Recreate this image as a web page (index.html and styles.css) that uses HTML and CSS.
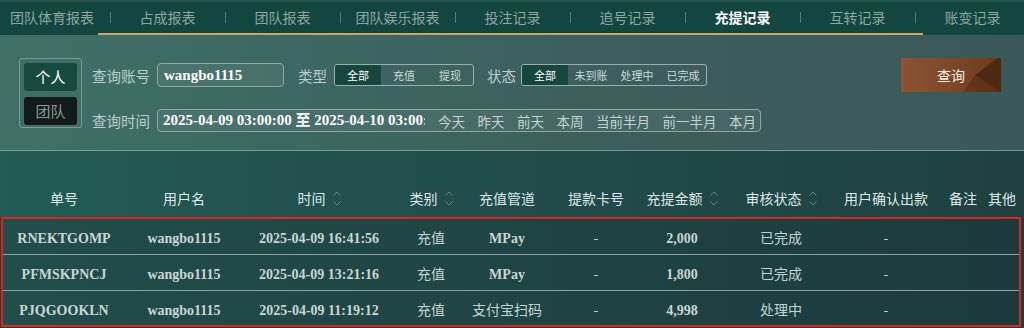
FILE: index.html
```html
<!DOCTYPE html>
<html lang="zh-CN">
<head>
	<meta charset="UTF-8">
	<title>充提记录</title>
	<link rel="stylesheet" href="styles.css">
</head>
<body>
	<!--顶部标签-->
	<div class="tabbar">
		<div class="tabs">
			<div class="tab first">团队体育报表</div>
			<div class="tab">占成报表</div>
			<div class="tab">团队报表</div>
			<div class="tab">团队娱乐报表</div>
			<div class="tab">投注记录</div>
			<div class="tab">追号记录</div>
			<div class="tab active">充提记录</div>
			<div class="tab">互转记录</div>
			<div class="tab">账变记录</div>
		</div>
		<div class="tab-line"></div>
	</div>

	<!--查询条件-->
	<div class="filter">
		<div class="toggle">
			<div class="toggle-btn on">个人</div>
			<div class="toggle-btn off">团队</div>
		</div>
		<div class="fields">
			<div class="field-row">
				<span class="label">查询账号</span>
				<div class="input account">wangbo1115</div>
				<span class="label ml">类型</span>
				<div class="seg">
					<span class="seg-item cur">全部</span>
					<span class="seg-item">充值</span>
					<span class="seg-item">提现</span>
				</div>
				<span class="label ml2">状态</span>
				<div class="seg">
					<span class="seg-item cur">全部</span>
					<span class="seg-item">未到账</span>
					<span class="seg-item">处理中</span>
					<span class="seg-item">已完成</span>
				</div>
			</div>
			<div class="field-row second">
				<span class="label">查询时间</span>
				<div class="input time">
					<div class="time-val">2025-04-09 03:00:00 至 2025-04-10 03:00:00</div>
					<div class="quick">
						<span>今天</span>
						<span>昨天</span>
						<span>前天</span>
						<span>本周</span>
						<span>当前半月</span>
						<span>前一半月</span>
						<span>本月</span>
					</div>
				</div>
			</div>
		</div>
		<div class="search-btn">查询</div>
	</div>

	<!--表格-->
	<div class="table">
		<div class="thead cols">
			<div>单号</div>
			<div>用户名</div>
			<div class="sort">时间<svg width="8" height="15" viewBox="0 0 8 15"><polyline points="0.5,4.5 4,1 7.5,4.5"/><polyline points="0.5,10.5 4,14 7.5,10.5"/></svg></div>
			<div class="sort">类别<svg width="8" height="15" viewBox="0 0 8 15"><polyline points="0.5,4.5 4,1 7.5,4.5"/><polyline points="0.5,10.5 4,14 7.5,10.5"/></svg></div>
			<div>充值管道</div>
			<div>提款卡号</div>
			<div class="sort">充提金额<svg width="8" height="15" viewBox="0 0 8 15"><polyline points="0.5,4.5 4,1 7.5,4.5"/><polyline points="0.5,10.5 4,14 7.5,10.5"/></svg></div>
			<div class="sort">审核状态<svg width="8" height="15" viewBox="0 0 8 15"><polyline points="0.5,4.5 4,1 7.5,4.5"/><polyline points="0.5,10.5 4,14 7.5,10.5"/></svg></div>
			<div>用户确认出款</div>
			<div>备注</div>
			<div>其他</div>
		</div>
		<div class="tbody">
			<div class="row cols">
				<div class="en">RNEKTGOMP</div>
				<div class="en">wangbo1115</div>
				<div class="en">2025-04-09 16:41:56</div>
				<div>充值</div>
				<div class="en">MPay</div>
				<div>-</div>
				<div class="en">2,000</div>
				<div>已完成</div>
				<div>-</div>
				<div></div>
				<div></div>
			</div>
			<div class="row cols">
				<div class="en">PFMSKPNCJ</div>
				<div class="en">wangbo1115</div>
				<div class="en">2025-04-09 13:21:16</div>
				<div>充值</div>
				<div class="en">MPay</div>
				<div>-</div>
				<div class="en">1,800</div>
				<div>已完成</div>
				<div>-</div>
				<div></div>
				<div></div>
			</div>
			<div class="row cols last">
				<div class="en">PJQGOOKLN</div>
				<div class="en">wangbo1115</div>
				<div class="en">2025-04-09 11:19:12</div>
				<div>充值</div>
				<div>支付宝扫码</div>
				<div>-</div>
				<div class="en">4,998</div>
				<div>处理中</div>
				<div>-</div>
				<div></div>
				<div></div>
			</div>
		</div>
	</div>
</body>
</html>
```

FILE: styles.css
```css
body{
	margin: 0;
	width: 1024px;
	height: 328px;
	overflow: hidden;
	font-family: "Noto Sans CJK SC", sans-serif;
	background-color: #1d3d3e;
	border-top: 2px solid #21544c;
	box-sizing: border-box;
}
/*顶部标签*/
.tabbar{
	background-color: #12463e;
	overflow: hidden;
}
.tabs{
	display: flex;
	height: 31px;
}
.tab{
	flex: none;
	width: 115px;
	line-height: 31px;
	text-align: center;
	font-size: 14px;
	color: #8ea7a1;
	background: linear-gradient(#557b73, #557b73) left center / 1px 11px no-repeat;
}
.tab.first{
	width: 110px;
	padding-right: 6px;
	box-sizing: border-box;
	background: none;
}
.tab.active{
	color: #ffffff;
	font-weight: 700;
}
.tab-line{
	width: 825px;
	height: 2px;
	margin-left: 98px;
	background-color: #c6a86a;
}
/*查询条件*/
.filter{
	display: flex;
	align-items: flex-start;
	height: 116px;
	padding: 23px 23px 0 19px;
	box-sizing: border-box;
	background: linear-gradient(90deg, #3f7068, #3c5e5c 60%, #3b5858);
	border-bottom: 1px solid #7f9997;
}
.toggle{
	width: 63px;
	height: 70px;
	padding: 4px;
	box-sizing: border-box;
	border: 1px solid #7b9994;
	border-radius: 3px;
	display: flex;
	flex-direction: column;
	gap: 6px;
}
.toggle-btn{
	height: 28px;
	line-height: 28px;
	text-align: center;
	font-size: 15px;
	border-radius: 3px;
}
.toggle-btn.on{
	background-color: #164a40;
	color: #ffffff;
}
.toggle-btn.off{
	background-color: #121a1a;
	color: #8b9a98;
}
.fields{
	margin-left: 10px;
	margin-top: 5px;
}
.field-row{
	display: flex;
	align-items: center;
	height: 24px;
}
.field-row.second{
	margin-top: 22px;
	height: 23px;
}
.label{
	font-size: 14.5px;
	color: #b9cfcb;
	margin-right: 7px;
	white-space: nowrap;
}
.label.ml{
	margin-left: 14px;
}
.label.ml2{
	margin-left: 13px;
	margin-right: 5px;
}
.input{
	height: 24px;
	border: 1px solid #90a8a4;
	border-radius: 4px;
	box-sizing: border-box;
	background-color: rgba(255,255,255,0.06);
	font-family: "Liberation Serif", "Noto Sans CJK SC", serif;
	font-weight: 700;
	font-size: 15px;
	color: #ffffff;
}
.input.account{
	width: 127px;
	padding-left: 6px;
	line-height: 22px;
}
.input.time{
	width: 604px;
	height: 23px;
	display: flex;
	align-items: center;
	padding-left: 5px;
}
.time-val{
	width: 262px;
	flex: none;
	overflow: hidden;
	white-space: nowrap;
	line-height: 21px;
}
.quick{
	display: flex;
	gap: 12.5px;
	margin-left: 13px;
	font-family: "Noto Sans CJK SC", sans-serif;
	font-weight: 400;
	font-size: 13.5px;
	color: #c3d4d0;
	white-space: nowrap;
}
.seg{
	display: flex;
	height: 22px;
	border: 1px solid #9bb0ad;
	border-radius: 3px;
	box-sizing: border-box;
	overflow: hidden;
}
.seg-item{
	width: 46px;
	line-height: 20px;
	text-align: center;
	font-size: 11px;
	color: #cbdbd8;
}
.seg-item.cur{
	background-color: #17463d;
	color: #ffffff;
}
.search-btn{
	position: relative;
	margin-left: auto;
	width: 100px;
	height: 34px;
	line-height: 34px;
	text-align: center;
	font-size: 14px;
	color: #f7ece4;
	background: linear-gradient(90deg, #8c5334, #7a4527 60%, #6c391d);
	overflow: hidden;
}
.search-btn::before{
	content: "";
	position: absolute;
	top: 0;
	left: 0;
	width: 100%;
	height: 100%;
	background-color: rgba(40,15,0,0.25);
	clip-path: polygon(74% 50%, 100% 100%, 62% 100%);
}
.search-btn::after{
	content: "";
	position: absolute;
	top: 0;
	left: 0;
	width: 100%;
	height: 100%;
	background-color: #4f2812;
	clip-path: polygon(97% 0, 100% 0, 100% 100%, 74% 50%);
}
/*表格*/
.cols{
	display: grid;
	grid-template-columns: 122px 118px 152px 72px 80px 98px 74px 124px 86px 68px 10px;
	justify-items: center;
	align-items: center;
	white-space: nowrap;
}
.cols > div{
	line-height: 20px;
}
.thead{
	height: 66px;
	padding: 0 0 9px 3px;
	box-sizing: border-box;
	align-items: end;
	font-size: 14px;
	color: #dde9e6;
	background: linear-gradient(90deg, #235b56, #214c4b 50%, #1f4041);
}
.sort{
	display: flex;
	align-items: center;
	gap: 7px;
}
.sort svg{
	fill: none;
	stroke: #5f847e;
	stroke-width: 1;
}
.tbody{
	margin: 0 3px 0 1px;
	border: 2px solid #d8271f;
}
.row{
	height: 36px;
	padding-top: 8px;
	box-sizing: border-box;
	align-items: baseline;
	border-bottom: 1px solid #8ea6a3;
	font-size: 14px;
	color: #c3d4d0;
	background: linear-gradient(90deg, #214d4a, #1f4444 50%, #1c3a3c);
}
.row.last{
	height: 34px;
	border-bottom: none;
}
.row .en{
	font-family: "Liberation Serif", serif;
	font-weight: 700;
	color: #c9d7d4;
}
```
